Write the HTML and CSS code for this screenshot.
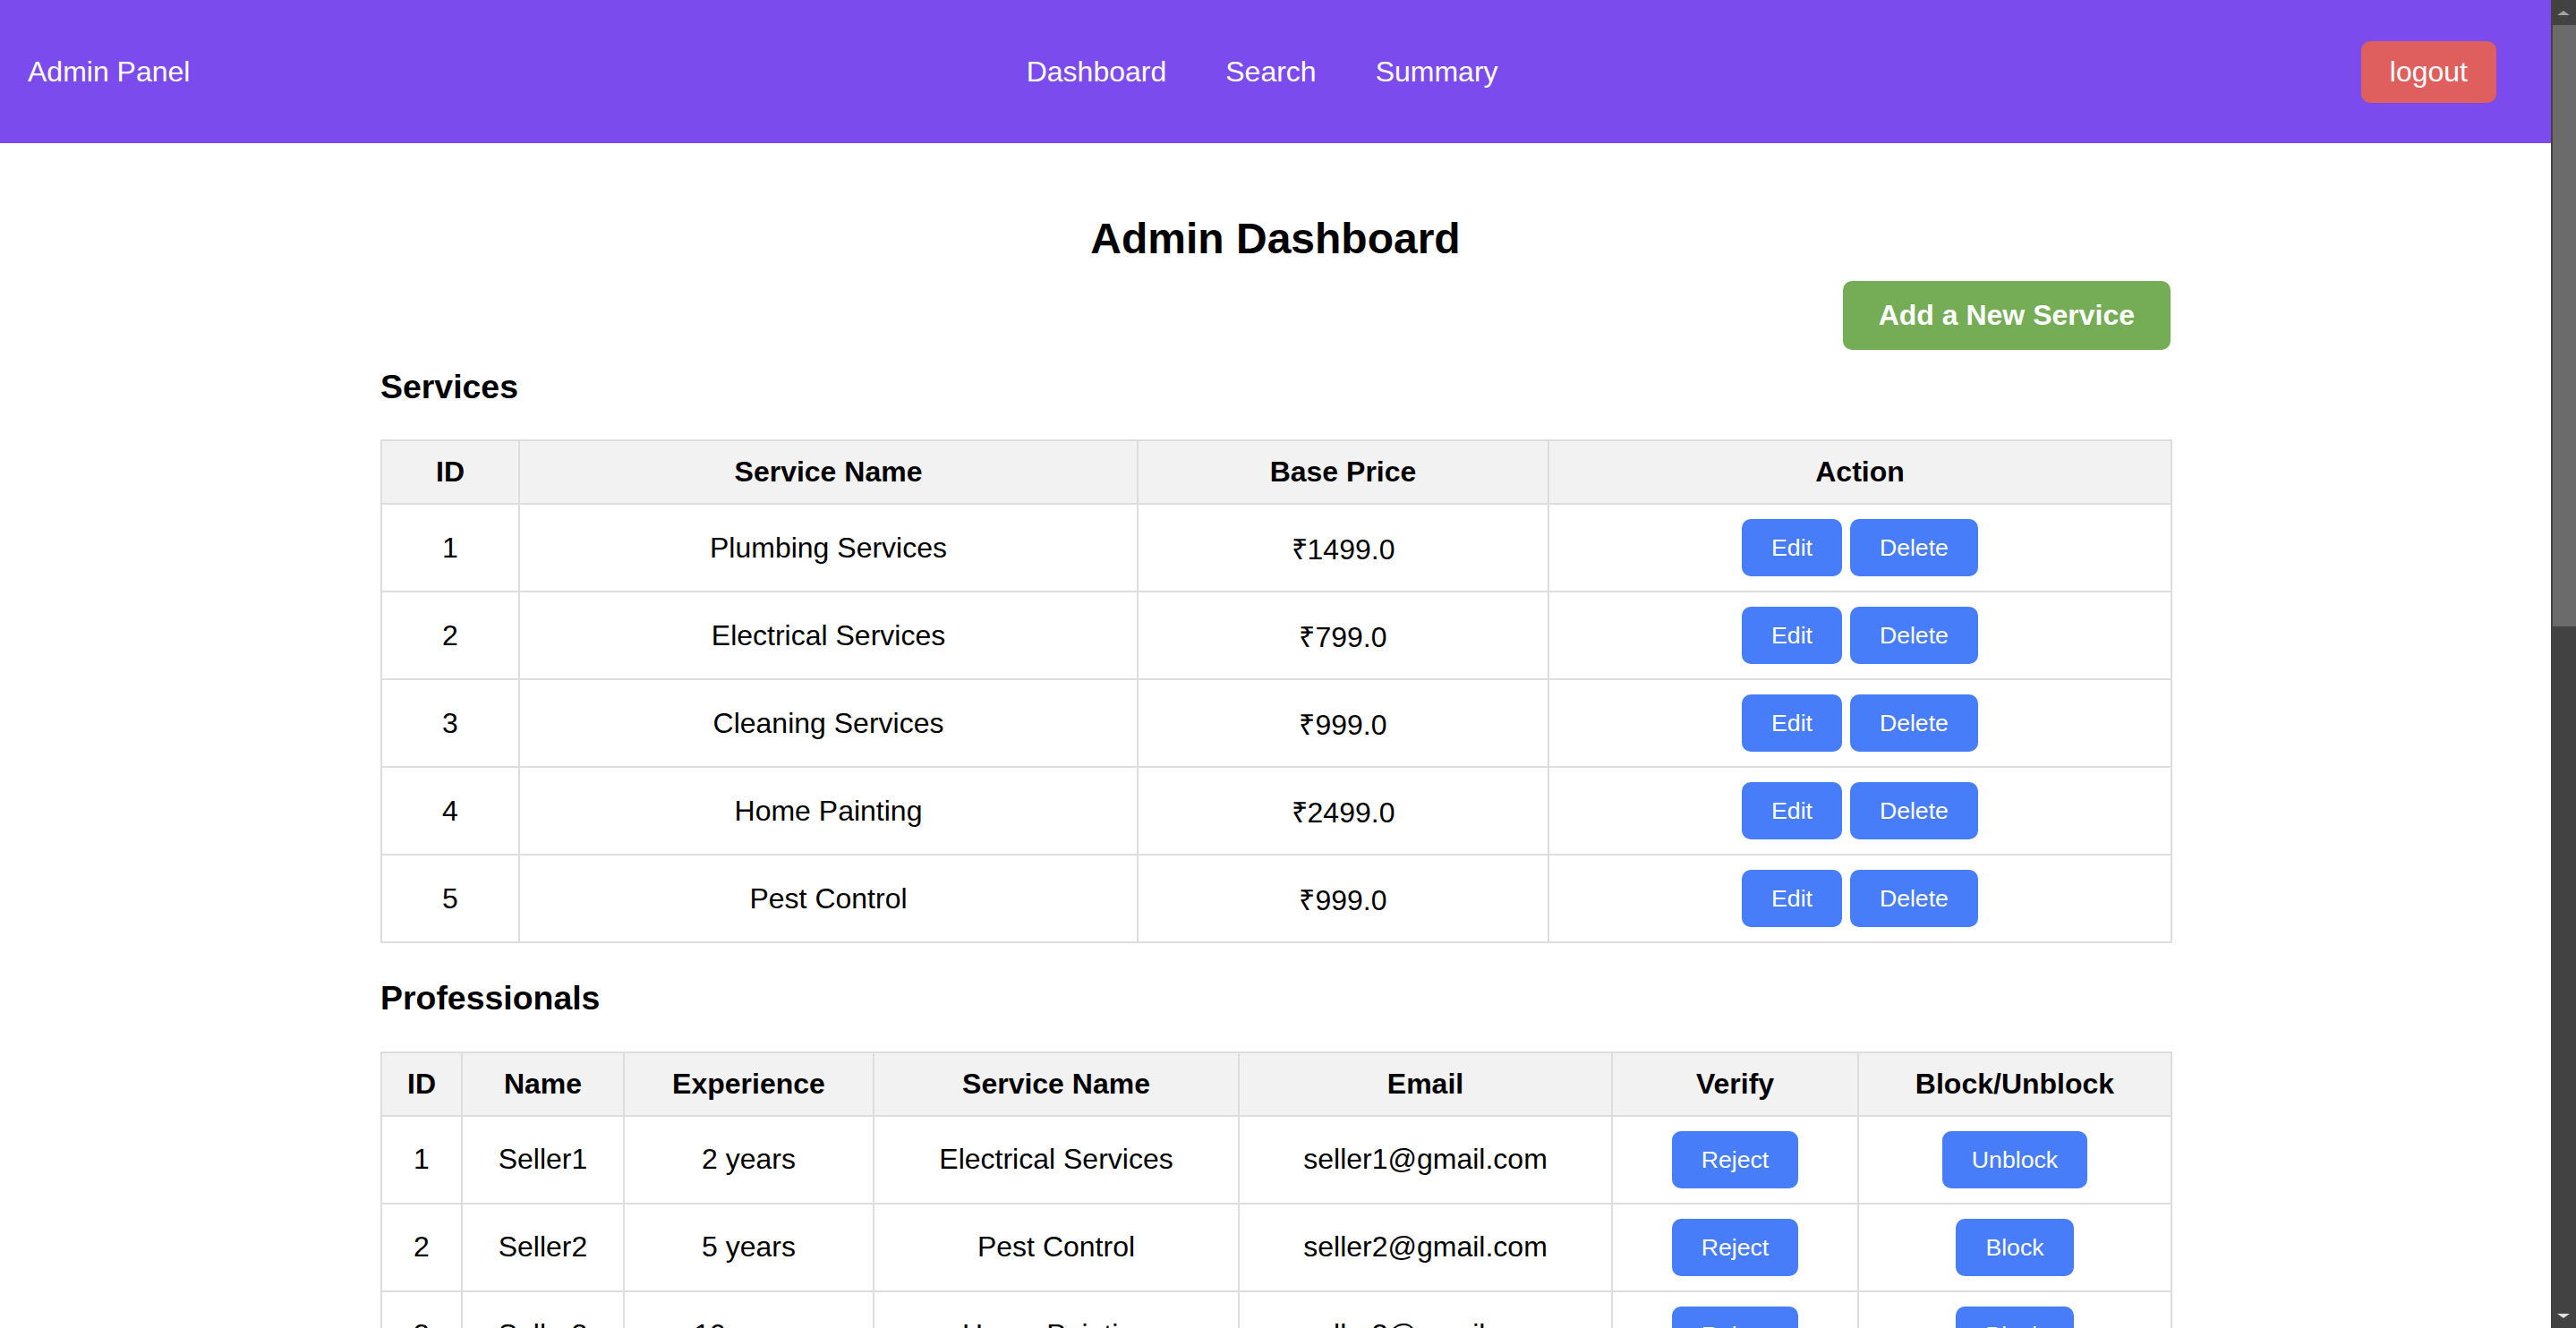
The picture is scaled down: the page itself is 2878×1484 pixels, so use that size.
FILE: index.html
```html
<!DOCTYPE html>
<html lang="en">
<head>
<meta charset="utf-8">
<title>Admin Dashboard</title>
<link rel="stylesheet" href="styles.css">
</head>
<body>
<div class="page">
<header class="navbar">
  <a class="brand" href="#">Admin Panel</a>
  <nav class="nav-links">
    <a href="#">Dashboard</a>
    <a href="#">Search</a>
    <a href="#">Summary</a>
  </nav>
  <button class="logout">logout</button>
</header>

<main class="container">
  <h2 class="page-title">Admin Dashboard</h2>
  <div class="toolbar">
    <button class="btn-add">Add a New Service</button>
  </div>

  <h3 class="section-title first">Services</h3>
  <table class="data-table">
    <colgroup>
      <col class="s-id"><col class="s-name"><col class="s-price"><col class="s-action">
    </colgroup>
    <thead>
      <tr><th>ID</th><th>Service Name</th><th>Base Price</th><th>Action</th></tr>
    </thead>
    <tbody>
      <tr><td>1</td><td>Plumbing Services</td><td>₹1499.0</td><td><button class="btn">Edit</button> <button class="btn">Delete</button></td></tr>
      <tr><td>2</td><td>Electrical Services</td><td>₹799.0</td><td><button class="btn">Edit</button> <button class="btn">Delete</button></td></tr>
      <tr><td>3</td><td>Cleaning Services</td><td>₹999.0</td><td><button class="btn">Edit</button> <button class="btn">Delete</button></td></tr>
      <tr><td>4</td><td>Home Painting</td><td>₹2499.0</td><td><button class="btn">Edit</button> <button class="btn">Delete</button></td></tr>
      <tr><td>5</td><td>Pest Control</td><td>₹999.0</td><td><button class="btn">Edit</button> <button class="btn">Delete</button></td></tr>
    </tbody>
  </table>

  <h3 class="section-title">Professionals</h3>
  <table class="data-table">
    <colgroup>
      <col class="p-id"><col class="p-name"><col class="p-exp"><col class="p-service"><col class="p-email"><col class="p-verify"><col class="p-block">
    </colgroup>
    <thead>
      <tr><th>ID</th><th>Name</th><th>Experience</th><th>Service Name</th><th>Email</th><th>Verify</th><th>Block/Unblock</th></tr>
    </thead>
    <tbody>
      <tr><td>1</td><td>Seller1</td><td>2 years</td><td>Electrical Services</td><td>seller1@gmail.com</td><td><button class="btn">Reject</button></td><td><button class="btn">Unblock</button></td></tr>
      <tr><td>2</td><td>Seller2</td><td>5 years</td><td>Pest Control</td><td>seller2@gmail.com</td><td><button class="btn">Reject</button></td><td><button class="btn">Block</button></td></tr>
      <tr><td>3</td><td>Seller3</td><td>10 years</td><td>Home Painting</td><td>seller3@gmail.com</td><td><button class="btn">Reject</button></td><td><button class="btn">Block</button></td></tr>
      <tr><td>4</td><td>Seller4</td><td>3 years</td><td>Plumbing Services</td><td>seller4@gmail.com</td><td><button class="btn">Reject</button></td><td><button class="btn">Block</button></td></tr>
      <tr><td>5</td><td>Seller5</td><td>7 years</td><td>Cleaning Services</td><td>seller5@gmail.com</td><td><button class="btn">Reject</button></td><td><button class="btn">Block</button></td></tr>
    </tbody>
  </table>

  <h3 class="section-title">Customers</h3>
  <table class="data-table">
    <thead>
      <tr><th>ID</th><th>Name</th><th>Email</th><th>Address</th><th>Pincode</th><th>Block/Unblock</th></tr>
    </thead>
    <tbody>
      <tr><td>1</td><td>Customer1</td><td>customer1@gmail.com</td><td>Delhi</td><td>110001</td><td><button class="btn">Block</button></td></tr>
      <tr><td>2</td><td>Customer2</td><td>customer2@gmail.com</td><td>Mumbai</td><td>400001</td><td><button class="btn">Block</button></td></tr>
      <tr><td>3</td><td>Customer3</td><td>customer3@gmail.com</td><td>Chennai</td><td>600001</td><td><button class="btn">Unblock</button></td></tr>
      <tr><td>4</td><td>Customer4</td><td>customer4@gmail.com</td><td>Kolkata</td><td>700001</td><td><button class="btn">Block</button></td></tr>
      <tr><td>5</td><td>Customer5</td><td>customer5@gmail.com</td><td>Pune</td><td>411001</td><td><button class="btn">Block</button></td></tr>
    </tbody>
  </table>

  <h3 class="section-title">Service Requests</h3>
  <table class="data-table">
    <thead>
      <tr><th>ID</th><th>Service Name</th><th>Customer</th><th>Professional</th><th>Status</th></tr>
    </thead>
    <tbody>
      <tr><td>1</td><td>Plumbing Services</td><td>Customer1</td><td>Seller4</td><td>Requested</td></tr>
      <tr><td>2</td><td>Electrical Services</td><td>Customer2</td><td>Seller1</td><td>Assigned</td></tr>
      <tr><td>3</td><td>Pest Control</td><td>Customer3</td><td>Seller2</td><td>Closed</td></tr>
      <tr><td>4</td><td>Home Painting</td><td>Customer4</td><td>Seller3</td><td>Requested</td></tr>
    </tbody>
  </table>
</main>
</div>

<div class="scrollbar" aria-hidden="true">
  <div class="sb-btn sb-up"><span class="tri-up"></span></div>
  <div class="sb-track">
    <div class="sb-thumb"></div>
  </div>
  <div class="sb-btn sb-down"><span class="tri-down"></span></div>
</div>
</body>
</html>
```

FILE: styles.css
```css
html, body {
  margin: 0;
  padding: 0;
}

html {
  overflow-x: hidden;
  scrollbar-width: none;
}

html::-webkit-scrollbar {
  display: none;
}

body {
  font-family: "Liberation Sans", Arial, sans-serif;
  font-size: 32px;
  color: #000;
  background: #fff;
}

.page {
  margin-right: 28px;
}

/* imitation of the dark browser scrollbar at the right edge */
.scrollbar {
  position: fixed;
  top: 0;
  right: 0;
  bottom: 0;
  width: 28px;
  background: #424242;
  display: flex;
  flex-direction: column;
}

.sb-btn {
  height: 28px;
  display: flex;
  align-items: center;
  justify-content: center;
  flex: none;
}

.sb-track {
  flex: 1;
  display: flex;
  flex-direction: column;
  padding-left: 2px;
}

.sb-thumb {
  height: 672px;
  background: #6b6b6b;
}

.tri-up {
  width: 0;
  height: 0;
  border-left: 7px solid transparent;
  border-right: 7px solid transparent;
  border-bottom: 5px solid #a3a3a3;
}

.tri-down {
  width: 0;
  height: 0;
  border-left: 7px solid transparent;
  border-right: 7px solid transparent;
  border-top: 5px solid #e0e0e0;
}

.navbar {
  height: 160px;
  background: #7b4bee;
  display: flex;
  align-items: center;
  justify-content: space-between;
  padding: 0 31px;
}

.brand {
  color: #fff;
  text-decoration: none;
  font-size: 32px;
}

.nav-links {
  display: flex;
}

.nav-links a {
  color: #fff;
  text-decoration: none;
  font-size: 32px;
  margin: 0 33px;
}

.logout {
  font-family: inherit;
  font-size: 32px;
  color: #fff;
  background: #df5f5f;
  border: none;
  border-radius: 10px;
  padding: 16px 32px;
  margin: 0 30px;
}

.container {
  width: 2000px;
  margin: 0 auto;
  padding: 40px 0 40px;
}

.page-title {
  font-size: 48px;
  font-weight: bold;
  text-align: center;
  margin: 39px 0 20px;
}

.toolbar {
  display: flex;
  justify-content: flex-end;
}

.btn-add {
  font-family: inherit;
  font-size: 32px;
  font-weight: bold;
  color: #fff;
  background: #75ad57;
  border: none;
  border-radius: 10px;
  padding: 20px 40px;
}

.section-title {
  font-size: 37.44px;
  font-weight: bold;
  margin: 40px 0 37.44px;
}

.section-title.first {
  margin-top: 20px;
}

.data-table {
  width: 100%;
  border-collapse: collapse;
  table-layout: fixed;
}

.data-table th,
.data-table td {
  border: 2px solid #dddddd;
  padding: 16px;
  text-align: center;
}

.data-table th {
  background: #f2f2f2;
  font-weight: bold;
}

.btn {
  font-family: inherit;
  font-size: 26.67px;
  line-height: 32px;
  color: #fff;
  background: #477df8;
  border: none;
  border-radius: 10px;
  padding: 16px 33px;
}

.s-id { width: 154px; }
.s-name { width: 691px; }
.s-price { width: 459px; }
.s-action { width: 696px; }

.p-id { width: 90px; }
.p-name { width: 181px; }
.p-exp { width: 279px; }
.p-service { width: 408px; }
.p-email { width: 417px; }
.p-verify { width: 275px; }
.p-block { width: 350px; }
```
